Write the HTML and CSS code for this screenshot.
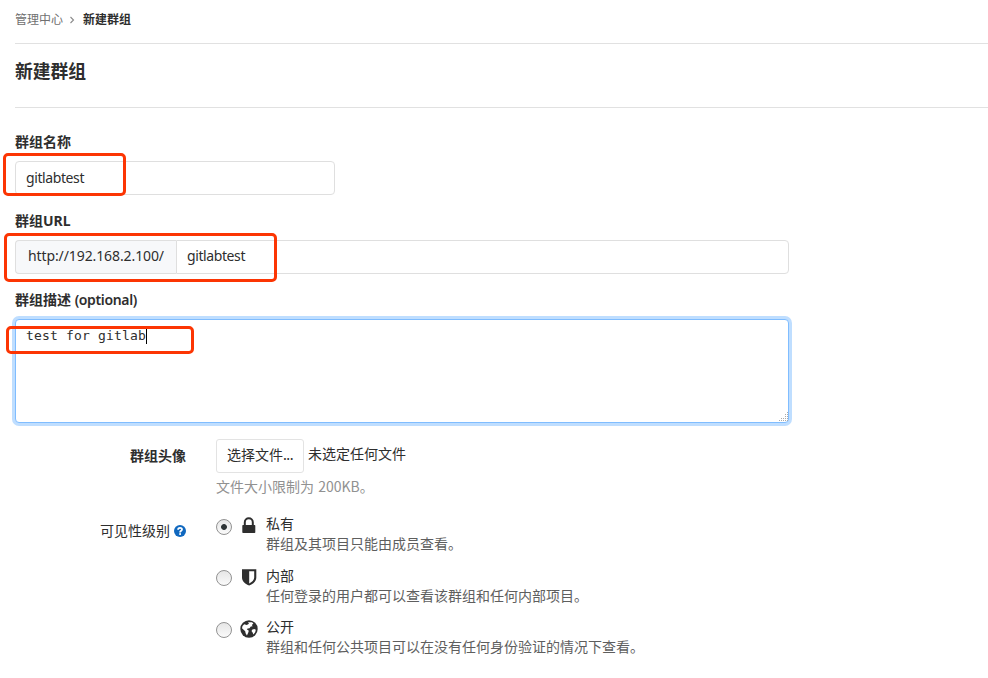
FILE: index.html
```html
<!DOCTYPE html>
<html lang="zh-CN">
	<head>
		<meta charset="utf-8">
		<title>新建群组</title>
		<link rel="stylesheet" href="styles.css">
	</head>
	<body>
		<div class="content">
			<!-- 面包屑 -->
			<nav class="breadcrumbs">
				<a class="crumb">管理中心</a>
				<svg class="angle" viewBox="0 0 8 8"><path d="M2.5 1 L5.500 4 L2.500 7" /></svg>
				<a class="crumb current">新建群组</a>
			</nav>
			<h3 class="page-title">新建群组</h3>
			<form class="group-form">
				<div class="form-group">
					<label class="label" for="name">群组名称</label>
					<div class="field">
						<input class="form-control name-input" id="name" type="text" value="gitlabtest">
						<div class="mark mark-name"></div>
					</div>
				</div>
				<div class="form-group">
					<label class="label" for="path">群组URL</label>
					<div class="field input-group">
						<span class="input-prefix">http://192.168.2.100/</span>
						<input class="form-control path-input" id="path" type="text" value="gitlabtest">
						<div class="mark mark-url"></div>
					</div>
				</div>
				<div class="form-group">
					<label class="label" for="desc">群组描述 <span class="optional">(optional)</span></label>
					<div class="field">
						<textarea class="form-control desc-input" id="desc" spellcheck="false">test for gitlab</textarea>
						<span class="caret"></span>
						<svg class="grip" viewBox="0 0 9 9">
							<path d="M8 0h1v1h-1z M6 2h1v1h-1z M8 2h1v1h-1z M6 4h1v1h-1z M8 4h1v1h-1z M2 6h1v1h-1z M4 6h1v1h-1z M6 6h1v1h-1z M8 6h1v1h-1z M0 8h1v1h-1z M2 8h1v1h-1z M4 8h1v1h-1z M6 8h1v1h-1z M8 8h1v1h-1z" />
						</svg>
						<div class="mark mark-desc"></div>
					</div>
				</div>
				<!-- 头像 -->
				<div class="row avatar-row">
					<div class="row-label label">群组头像</div>
					<div class="row-body">
						<div class="file-line">
							<button class="btn" type="button">选择文件<span class="dots">...</span></button>
							<span class="file-name">未选定任何文件</span>
						</div>
						<p class="help">文件大小限制为 200KB。</p>
					</div>
				</div>
				<!-- 可见性 -->
				<div class="row level-row">
					<div class="row-label level-label">
						<span>可见性级别</span>
						<svg class="question" viewBox="0 0 12 12">
							<circle cx="6" cy="6" r="6" fill="#1068bf" />
							<path d="M4.1 4.700 C4.100 2.300 8 2.300 8 4.600 C8 5.900 6.100 5.800 6.100 7.400" fill="none" stroke="#fff" stroke-width="1.8" />
							<rect x="5.200" y="8.200" width="1.800" height="1.700" fill="#fff" />
						</svg>
					</div>
					<div class="row-body levels">
						<div class="level">
							<span class="radio checked"></span>
							<svg class="icon" viewBox="0 0 18 18"><path d="M3 8h11.600a.7.7 0 0 1 .7.7v6.600a.7.7 0 0 1-.7.7H3a.7.7 0 0 1-.7-.7V8.700a.7.7 0 0 1 .7-.7z" /><path class="line" d="M4.800 8.500V5.300a4 4 0 0 1 8 0v3.200" /></svg>
							<div class="level-text">
								<div class="level-title">私有</div>
								<div class="level-desc">群组及其项目只能由成员查看。</div>
							</div>
						</div>
						<div class="level">
							<span class="radio"></span>
							<svg class="icon" viewBox="0 0 18 18"><path fill-rule="evenodd" d="M2 1.200h14.300v8.300c0 4-3.500 6.500-7.100 8.100c-3.600-1.600-7.200-4.100-7.200-8.100z M9.200 3.200v12.200c2.700-1.300 5-3.200 5-5.800V3.200z" /></svg>
							<div class="level-text">
								<div class="level-title">内部</div>
								<div class="level-desc">任何登录的用户都可以查看该群组和任何内部项目。</div>
							</div>
						</div>
						<div class="level">
							<span class="radio"></span>
							<svg class="icon" viewBox="0 0 18 18">
								<circle cx="9" cy="9" r="8.700" />
								<path class="land" d="M8 2.200 L12 2.300 L13.400 3.500 L11.800 5 L12.700 6.200 L10.800 6.500 L9.500 8.200 L7.700 8.600 L6.800 9.300 L8.800 10.800 L8.200 12.800 L6.900 15.600 L5.600 13.300 L5.200 11.300 L2 8.300 L2.500 6 L4.200 4.200 L6.800 5 L9 3.800z" />
								<path class="land" d="M12 9.800 L14.200 9 L15.800 9.800 L15.200 12.300 L13.400 14.400 L12.600 12.400 L11.600 11.300z" />
							</svg>
							<div class="level-text">
								<div class="level-title">公开</div>
								<div class="level-desc">群组和任何公共项目可以在没有任何身份验证的情况下查看。</div>
							</div>
						</div>
					</div>
				</div>
			</form>
		</div>
	</body>
</html>
```
FILE: styles.css
```css
* {
	margin: 0;
	padding: 0;
	box-sizing: border-box;
}
body {
	background: #fff;
	color: #2e2e2e;
	font-family: "Noto Sans", "Noto Sans CJK SC", sans-serif;
	font-size: 14px;
	line-height: 20px;
	overflow: hidden;
}
.content {
	padding-left: 15px;
}
.breadcrumbs {
	height: 44px;
	padding-bottom: 3px;
	border-bottom: 1px solid #e1e1e1;
	display: flex;
	align-items: center;
	font-size: 12px;
}
.crumb {
	color: #707070;
}
.current {
	color: #2e2e2e;
	font-weight: bold;
}
.angle {
	width: 8px;
	height: 8px;
	margin: 0 7px 0 5px;
	fill: none;
	stroke: #8a8a8a;
	stroke-width: 1.1;
}
.page-title {
	height: 64px;
	padding-top: 15px;
	border-bottom: 1px solid #e1e1e1;
	font-size: 17.8px;
	line-height: 24px;
}
.group-form {
	padding-top: 24px;
}
.form-group {
	margin-bottom: 16px;
}
.label {
	display: block;
	font-weight: bold;
	line-height: 20px;
}
.form-group .label {
	margin-bottom: 9px;
}
.optional {
	font-weight: 600;
	letter-spacing: -0.35px;
}
.field {
	position: relative;
	width: 774px;
}
.form-control {
	display: block;
	height: 34px;
	padding: 5px 10px 7px;
	border: 1px solid #dfdfdf;
	border-radius: 4px;
	background: #fff;
	color: #2e2e2e;
	font-family: inherit;
	font-size: 14px;
	line-height: 20px;
	letter-spacing: -0.4px;
	outline: none;
}
.name-input {
	width: 320px;
}
.input-group {
	display: flex;
}
.input-prefix {
	width: 161px;
	height: 34px;
	padding: 5px 12px;
	border: 1px solid #dfdfdf;
	border-right: none;
	border-radius: 4px 0 0 4px;
	background: #f7f8fa;
	letter-spacing: -0.1px;
}
.path-input {
	flex: 1;
	padding-bottom: 8px;
	border-radius: 0 4px 4px 0;
}
.desc-input {
	width: 774px;
	height: 104px;
	padding: 6px 10px;
	border-color: #80bdff;
	box-shadow: 0 0 0 3px #bfdeff;
	font-family: "DejaVu Sans Mono", monospace;
	font-size: 13px;
	letter-spacing: 0.17px;
	resize: none;
}
.caret {
	position: absolute;
	left: 131px;
	top: 9px;
	width: 1px;
	height: 16px;
	background: #000;
}
.grip {
	position: absolute;
	right: 1px;
	bottom: 2px;
	width: 9px;
	height: 9px;
	fill: #aaa;
}
/* 红色标注框 */
.mark {
	position: absolute;
	border: 3px solid #fc3503;
	border-radius: 5px;
}
.mark-name {
	left: -12px;
	top: -8px;
	width: 123px;
	height: 43px;
}
.mark-url {
	left: -11px;
	top: -7px;
	width: 273px;
	height: 49px;
}
.mark-desc {
	left: -9px;
	top: 7px;
	width: 188px;
	height: 28px;
}
.row {
	display: flex;
}
.row-label {
	width: 171px;
	margin-right: 30px;
	text-align: right;
}
.avatar-row .row-label {
	padding-top: 7px;
}
.file-line {
	display: flex;
}
.btn {
	width: 88px;
	height: 34px;
	padding-bottom: 4px;
	border: 1px solid #e3e3e3;
	border-radius: 3px;
	background: #fff;
	color: #2e2e2e;
	font-family: "Noto Sans CJK SC", sans-serif;
	font-size: 14px;
}
.dots {
	letter-spacing: -0.6px;
}
.file-name {
	margin-left: 4px;
	padding-top: 5px;
}
.help {
	height: 20px;
	margin: 3px 0 2px;
	color: #919191;
	font-family: "Noto Sans CJK SC", sans-serif;
	word-spacing: 1px;
}
.level-row {
	padding-top: 16px;
}
.level-label {
	display: flex;
	justify-content: flex-end;
	align-items: center;
	height: 20px;
	margin-top: 7px;
}
.question {
	width: 12px;
	height: 12px;
	margin-left: 4px;
}
.level {
	display: flex;
	height: 51.5px;
}
.level-title {
	height: 20.3px;
	line-height: 19.8px;
}
.radio {
	width: 16px;
	height: 16px;
	margin-top: 4.5px;
	border: 1px solid #929292;
	border-radius: 50%;
	background: linear-gradient(#e6e6e6, #fafafa);
}
.checked {
	background: radial-gradient(circle, #2e3436 2.5px, transparent 3.3px), linear-gradient(#e6e6e6, #fafafa);
}
.icon {
	width: 18px;
	height: 18px;
	margin: 2.5px 8.5px 0 7.5px;
	fill: #2e2e2e;
}
.icon .line {
	fill: none;
	stroke: #2e2e2e;
	stroke-width: 2;
}
.icon .land {
	fill: #fff;
}
.level-desc {
	color: #5e5e5e;
}
```
